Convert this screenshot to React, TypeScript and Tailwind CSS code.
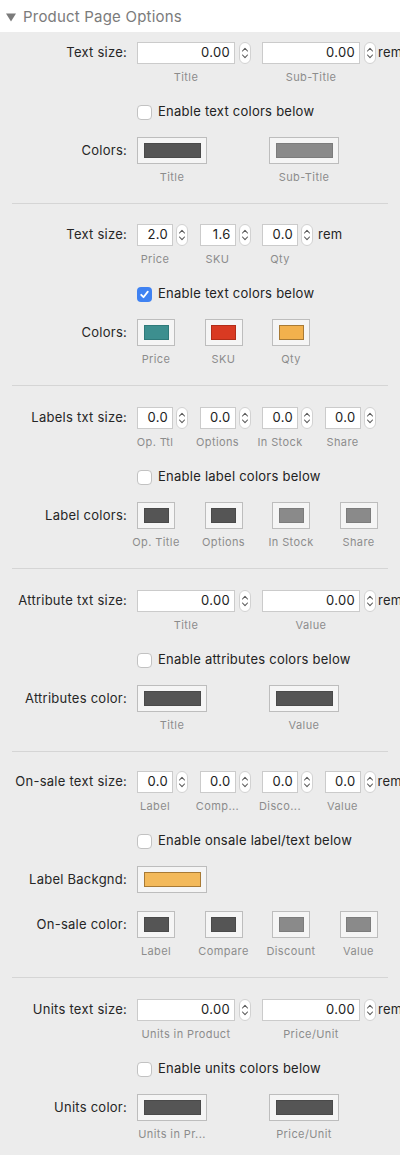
import React from "react";

type Swatch = { color: string; edge: string };

const DARK: Swatch = { color: "#555555", edge: "#4a4a4a" };
const LIGHT: Swatch = { color: "#8a8a8a", edge: "#7c7c7c" };

const Stepper = ({ gap }: { gap: string }) => (
  <div
    className={`${gap} flex h-[22px] w-[12px] shrink-0 items-center justify-center rounded-full border border-[#d2d2d2] bg-white`}
  >
    <svg width="8" height="16" viewBox="0 0 8 16" fill="none" stroke="#5a5a5a" strokeWidth="1.1" strokeLinecap="round" strokeLinejoin="round">
      <path d="M1.5 6 L4 3.3 L6.5 6" />
      <path d="M1.5 10 L4 12.7 L6.5 10" />
    </svg>
  </div>
);

const Field = ({ value, big }: { value: string; big: boolean }) => (
  <div
    className={`${big ? "w-[98px]" : "w-[36px]"} flex h-[22px] shrink-0 items-center justify-end border border-[#cbcbcb] bg-white pr-[4px] text-[13px] tracking-[0.3px] text-[#222]`}
  >
    {value}
  </div>
);

const RowLabel = ({ children }: { children: React.ReactNode }) => (
  <div className="w-[137px] shrink-0 whitespace-nowrap pr-[10px] text-right text-[13px] tracking-[0.25px] text-[#262626]">
    {children}
  </div>
);

const FieldRow = ({
  label,
  values,
  big,
  rem,
}: {
  label: string;
  values: string[];
  big: boolean;
  rem?: "tight" | "loose";
}) => (
  <div className="flex h-[22px] items-center">
    <RowLabel>{label}</RowLabel>
    {values.map((v, i) => (
      <div key={i} className={`${big ? "w-[125px]" : "w-[62.5px]"} flex shrink-0 items-center`}>
        <Field value={v} big={big} />
        <Stepper gap={big ? "ml-[4px]" : "ml-[3px]"} />
        {rem && i === values.length - 1 && (
          <span
            className={`${rem === "tight" ? "ml-[2px]" : "ml-[5px]"} whitespace-nowrap text-[13px] tracking-[0.25px] text-[#262626]`}
          >
            rem
          </span>
        )}
      </div>
    ))}
  </div>
);

const SubLabels = ({ items, big }: { items: string[]; big: boolean }) => (
  <div className="mt-[6px] flex h-[14px] pl-[137px] text-[11px] leading-[14px] tracking-[0.4px] text-[#8c8c8c]">
    {items.map((s) => (
      <div key={s} className={`${big ? "w-[125px]" : "w-[62.5px]"} shrink-0`}>
        <div className={`${big ? "w-[98px]" : "w-[36px]"} flex justify-center whitespace-nowrap`}>{s}</div>
      </div>
    ))}
  </div>
);

const CheckRow = ({ text, checked }: { text: string; checked?: boolean }) => (
  <div className="mt-[20px] flex h-[16px] items-center pl-[137px]">
    {checked ? (
      <div className="flex h-[15px] w-[15px] items-center justify-center rounded-[4px] bg-[#3f82f2]">
        <svg width="11" height="11" viewBox="0 0 11 11" fill="none" stroke="white" strokeWidth="1.8" strokeLinecap="round" strokeLinejoin="round">
          <path d="M2.2 5.8 L4.5 8.2 L8.8 2.6" />
        </svg>
      </div>
    ) : (
      <div className="h-[15px] w-[15px] rounded-[4px] border border-[#c2c2c2] bg-white" />
    )}
    <span className="ml-[6px] text-[13px] tracking-[0.25px] text-[#222]">{text}</span>
  </div>
);

const Well = ({ sw, big }: { sw: Swatch; big: boolean }) => (
  <div
    className={`${big ? "w-[70px]" : "w-[38px]"} flex h-[27px] items-center justify-center border border-[#bdbdbd] bg-[#f5f5f5]`}
  >
    <div
      className={`${big ? "w-[57px]" : "w-[25px]"} h-[15px] border`}
      style={{ backgroundColor: sw.color, borderColor: sw.edge }}
    />
  </div>
);

const WellRow = ({
  label,
  swatches,
  big,
  mt = "mt-[17px]",
}: {
  label: string;
  swatches: Swatch[];
  big: boolean;
  mt?: string;
}) => (
  <div className={`${mt} flex h-[27px] items-center`}>
    <RowLabel>{label}</RowLabel>
    {swatches.map((s, i) => (
      <div key={i} className={`${big ? "w-[132px]" : "w-[67.5px]"} shrink-0`}>
        <Well sw={s} big={big} />
      </div>
    ))}
  </div>
);

const WellLabels = ({ items, big }: { items: string[]; big: boolean }) => (
  <div className="mt-[6px] flex h-[14px] pl-[137px] text-[11px] leading-[14px] tracking-[0.4px] text-[#8c8c8c]">
    {items.map((s) => (
      <div key={s} className={`${big ? "w-[132px]" : "w-[67.5px]"} shrink-0`}>
        <div className={`${big ? "w-[70px]" : "w-[38px]"} flex justify-center whitespace-nowrap`}>{s}</div>
      </div>
    ))}
  </div>
);

const Divider = () => <div className="mx-[12px] mt-[19px] h-px bg-[#d5d5d5]" />;

export default function App() {
  return (
    <div className="h-[1155px] w-[400px] overflow-hidden bg-[#ececec] font-['Inter','Noto_Sans',sans-serif]">
      {/* header */}
      <div className="flex h-[32px] items-center bg-white pl-[6px] pt-[3px]">
        <svg width="10" height="9" viewBox="0 0 10 9">
          <polygon points="0,0.5 10,0.5 5,8.5" fill="#7b7b7b" />
        </svg>
        <span className="ml-[7px] text-[15px] tracking-[0.2px] text-[#7b7b7b]">Product Page Options</span>
      </div>

      {/* title / sub-title */}
      <div className="pt-[10px]">
        <FieldRow label="Text size:" values={["0.00", "0.00"]} big rem="tight" />
        <SubLabels items={["Title", "Sub-Title"]} big />
        <CheckRow text="Enable text colors below" />
        <WellRow label="Colors:" swatches={[DARK, LIGHT]} big />
        <WellLabels items={["Title", "Sub-Title"]} big />
        <Divider />
      </div>

      {/* price / sku / qty */}
      <div className="pt-[20px]">
        <FieldRow label="Text size:" values={["2.0", "1.6", "0.0"]} big={false} rem="loose" />
        <SubLabels items={["Price", "SKU", "Qty"]} big={false} />
        <CheckRow text="Enable text colors below" checked />
        <WellRow
          label="Colors:"
          big={false}
          swatches={[
            { color: "#3d8f8f", edge: "#2f7a7a" },
            { color: "#d93a22", edge: "#b22d18" },
            { color: "#f2b14d", edge: "#a87a35" },
          ]}
        />
        <WellLabels items={["Price", "SKU", "Qty"]} big={false} />
        <Divider />
      </div>

      {/* labels */}
      <div className="pt-[21px]">
        <FieldRow label="Labels txt size:" values={["0.0", "0.0", "0.0", "0.0"]} big={false} />
        <SubLabels items={["Op. Ttl", "Options", "In Stock", "Share"]} big={false} />
        <CheckRow text="Enable label colors below" />
        <WellRow label="Label colors:" big={false} swatches={[DARK, DARK, LIGHT, LIGHT]} />
        <WellLabels items={["Op. Title", "Options", "In Stock", "Share"]} big={false} />
        <Divider />
      </div>

      {/* attributes */}
      <div className="pt-[21px]">
        <FieldRow label="Attribute txt size:" values={["0.00", "0.00"]} big rem="tight" />
        <SubLabels items={["Title", "Value"]} big />
        <CheckRow text="Enable attributes colors below" />
        <WellRow label="Attributes color:" swatches={[DARK, DARK]} big />
        <WellLabels items={["Title", "Value"]} big />
        <Divider />
      </div>

      {/* on-sale */}
      <div className="pt-[19px]">
        <FieldRow label="On-sale text size:" values={["0.0", "0.0", "0.0", "0.0"]} big={false} rem="tight" />
        <SubLabels items={["Label", "Comp...", "Disco...", "Value"]} big={false} />
        <CheckRow text="Enable onsale label/text below" />
        <WellRow label="Label Backgnd:" big swatches={[{ color: "#f3b95a", edge: "#a87a35" }]} />
        <WellRow label="On-sale color:" big={false} mt="mt-[18px]" swatches={[DARK, DARK, LIGHT, LIGHT]} />
        <WellLabels items={["Label", "Compare", "Discount", "Value"]} big={false} />
        <Divider />
      </div>

      {/* units */}
      <div className="pt-[21px]">
        <FieldRow label="Units text size:" values={["0.00", "0.00"]} big rem="tight" />
        <SubLabels items={["Units in Product", "Price/Unit"]} big />
        <CheckRow text="Enable units colors below" />
        <WellRow label="Units color:" swatches={[DARK, DARK]} big />
        <WellLabels items={["Units in Pr...", "Price/Unit"]} big />
      </div>
    </div>
  );
}
